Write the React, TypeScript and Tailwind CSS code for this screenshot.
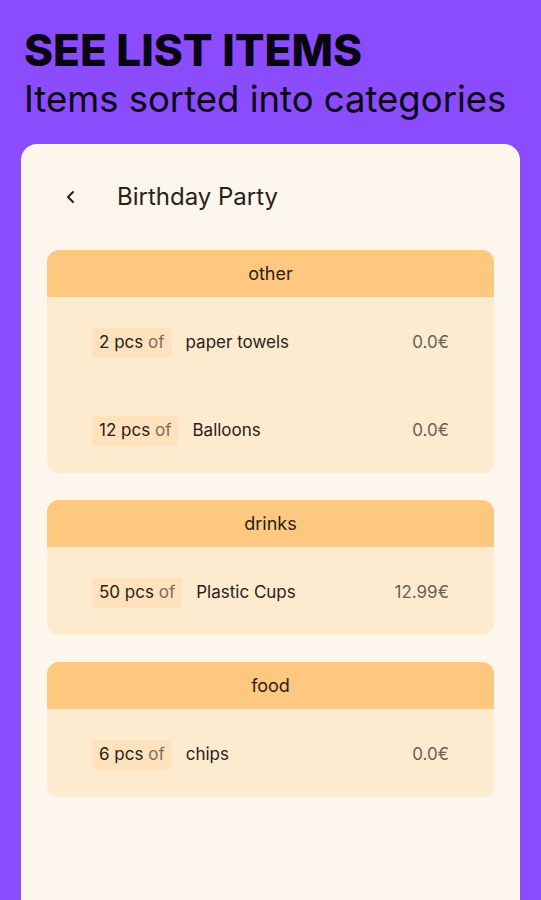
import React from 'react';

interface Item {
  qty: number;
  name: string;
  price: string;
}

interface Category {
  title: string;
  items: Item[];
}

const categories: Category[] = [
  {
    title: 'other',
    items: [
      { qty: 2, name: 'paper towels', price: '0.0€' },
      { qty: 12, name: 'Balloons', price: '0.0€' },
    ],
  },
  {
    title: 'drinks',
    items: [{ qty: 50, name: 'Plastic Cups', price: '12.99€' }],
  },
  {
    title: 'food',
    items: [{ qty: 6, name: 'chips', price: '0.0€' }],
  },
];

const ItemRow: React.FC<{ item: Item }> = ({ item }) => (
  <div className="h-[88px] flex items-center pl-[45px] pr-[45px] pt-[3px]">
    <span className="h-[30px] px-[7px] flex items-center rounded-[3px] bg-[#fde2bd] text-[17px] text-[#2a2018]">
      {item.qty} pcs&nbsp;<span className="text-[#7b6d60]">of</span>
    </span>
    <span className="ml-[14px] text-[17px] text-[#2a2018]">{item.name}</span>
    <span className="ml-auto text-[17px] text-[#6a5f56]">{item.price}</span>
  </div>
);

const CategoryCard: React.FC<{ category: Category }> = ({ category }) => (
  <div className="rounded-[12px] overflow-hidden bg-[#fdebd0]">
    <div className="h-[47px] flex items-center justify-center bg-[#fec880] text-[18px] text-[#2a2018]">
      {category.title}
    </div>
    {category.items.map((item) => (
      <ItemRow key={item.name} item={item} />
    ))}
  </div>
);

export default function App() {
  return (
    <div
      className="w-[541px] h-[900px] overflow-hidden bg-[#8a4cfc] flex flex-col"
      style={{ fontFamily: 'Inter, "Noto Sans", sans-serif' }}
    >
      <div className="pl-[24px] pt-[25px] text-[#0a0512]">
        <h1 className="text-[44px] leading-[50px] font-extrabold">SEE LIST ITEMS</h1>
        <p className="text-[36.5px] leading-[44px] mt-[2px]">Items sorted into categories</p>
      </div>

      <div className="mx-[21px] mt-[23px] flex-1 rounded-t-[16px] bg-[#fdf6ec] px-[26px]">
        <div className="h-[106px] flex items-center">
          <svg width="14" height="14" viewBox="0 0 14 14" className="ml-[17px]">
            <path d="M9 2 L4 7 L9 12" fill="none" stroke="#2a2018" strokeWidth="2" strokeLinecap="round" strokeLinejoin="round" />
          </svg>
          <span className="ml-[39px] text-[24px] text-[#2a2018]">Birthday Party</span>
        </div>
        <div className="flex flex-col gap-[27px]">
          {categories.map((c) => (
            <CategoryCard key={c.title} category={c} />
          ))}
        </div>
      </div>
    </div>
  );
}
